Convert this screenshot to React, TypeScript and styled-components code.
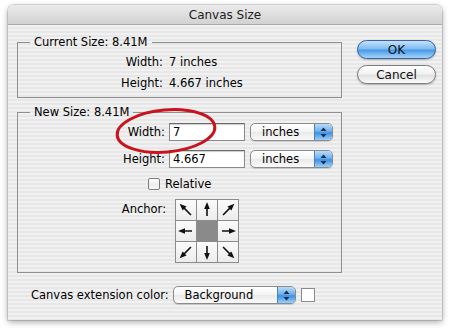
import React from "react";
import styled, { createGlobalStyle } from "styled-components";

const GlobalStyle = createGlobalStyle`
  html, body {
    margin: 0;
    padding: 0;
    background: #ffffff;
  }
  body {
    width: 450px;
    height: 328px;
    overflow: hidden;
    font-family: "DejaVu Sans", "Lucida Grande", sans-serif;
    font-size: 11.5px;
    color: #000;
  }
`;

const Page = styled.div`
  padding: 5px 8px 0 8px;
`;

const Window = styled.div`
  position: relative;
  width: 434px;
  height: 315px;
  border-radius: 6px 6px 0 0;
  background: repeating-linear-gradient(
    to bottom,
    #f1f1f1 0,
    #f1f1f1 2px,
    #e7e7e7 2px,
    #e7e7e7 4px
  );
  box-shadow: 0 2px 6px rgba(0, 0, 0, 0.35), 0 0 0 1px rgba(0, 0, 0, 0.12);
  overflow: hidden;
`;

const TitleBar = styled.div`
  height: 19px;
  border-bottom: 1px solid #a9a9a9;
  background: linear-gradient(to bottom, #ececec 0%, #dedede 50%, #d2d2d2 100%);
  display: flex;
  align-items: center;
  justify-content: center;
  font-size: 12px;
  color: #222;
`;

const Body = styled.div`
  display: flex;
  padding: 0 6px 0 9px;
`;

const LeftColumn = styled.div`
  width: 325px;
  display: flex;
  flex-direction: column;
`;

const RightColumn = styled.div`
  margin-left: 15px;
  width: 79px;
  padding-top: 15px;
  display: flex;
  flex-direction: column;
  gap: 6px;
`;

const Group = styled.fieldset<{ $top: number }>`
  margin: ${(p) => p.$top}px 0 0 0;
  padding: 0;
  min-width: 0;
  border: 1px solid #8f8f8f;
  border-radius: 0;
`;

const Legend = styled.legend`
  margin-left: 12px;
  padding: 0 4px;
  line-height: 16px;
`;

const InfoRows = styled.div`
  padding: 2px 0 4px 0;
  display: flex;
  flex-direction: column;
  gap: 1px;
`;

const InfoRow = styled.div`
  display: flex;
  height: 20px;
  align-items: center;
`;

const Label = styled.span<{ $width: number }>`
  width: ${(p) => p.$width}px;
  text-align: right;
  flex-shrink: 0;
`;

const Value = styled.span`
  margin-left: 6px;
`;

const NewRows = styled.div`
  padding: 3px 0 9px 0;
  display: flex;
  flex-direction: column;
`;

const FieldRow = styled.div<{ $gap: number }>`
  display: flex;
  align-items: center;
  height: 18px;
  margin-top: ${(p) => p.$gap}px;
`;

const TextInput = styled.div`
  margin-left: 4px;
  width: 76px;
  height: 18px;
  box-sizing: border-box;
  border: 1px solid #8a8a8a;
  border-top-color: #6a6a6a;
  box-shadow: inset 0 1px 1px rgba(0, 0, 0, 0.2);
  background: #fff;
  padding-left: 3px;
  display: flex;
  align-items: center;
`;

const SelectBox = styled.div<{ $width: number; $left: number }>`
  margin-left: ${(p) => p.$left}px;
  width: ${(p) => p.$width}px;
  height: 18px;
  box-sizing: border-box;
  border: 1px solid #8b8b8b;
  border-radius: 5px;
  background: linear-gradient(to bottom, #ffffff 0%, #f4f4f4 50%, #e9e9e9 51%, #fafafa 100%);
  box-shadow: 0 1px 1px rgba(0, 0, 0, 0.15);
  display: flex;
  align-items: center;
  overflow: hidden;
`;

const SelectText = styled.span`
  flex: 1;
  padding-left: 11px;
`;

const Stepper = styled.div`
  width: 17px;
  height: 100%;
  border-left: 1px solid #4f7fbf;
  background: linear-gradient(to bottom, #b9dcf8 0%, #6fb1ee 45%, #3f8fe2 55%, #9bd0fb 100%);
  display: flex;
  align-items: center;
  justify-content: center;
`;

const CheckRow = styled.div`
  display: flex;
  align-items: center;
  height: 18px;
  margin-top: 7px;
  padding-left: 130px;
  gap: 5px;
`;

const CheckBox = styled.div`
  width: 12px;
  height: 12px;
  box-sizing: border-box;
  border: 1px solid #7d7d7d;
  border-radius: 2px;
  background: linear-gradient(to bottom, #ffffff 0%, #ececec 60%, #f8f8f8 100%);
`;

const AnchorRow = styled.div`
  display: flex;
  align-items: flex-start;
  margin-top: 6px;
`;

const AnchorLabel = styled.span`
  width: 148px;
  text-align: right;
  line-height: 20px;
`;

const AnchorGrid = styled.div`
  margin-left: 9px;
  display: grid;
  grid-template-columns: repeat(3, 20px);
  grid-template-rows: repeat(3, 20px);
  gap: 1px;
  padding: 1px;
  background: #8c8c8c;
`;

const AnchorCell = styled.div<{ $active?: boolean }>`
  background: ${(p) =>
    p.$active ? "#8a8a8a" : "linear-gradient(to bottom, #fbfbfb, #ececec)"};
  display: flex;
  align-items: center;
  justify-content: center;
`;

const ExtensionRow = styled.div`
  display: flex;
  align-items: center;
  margin-top: 13px;
  padding-left: 14px;
`;

const Swatch = styled.div`
  margin-left: 5px;
  width: 14px;
  height: 14px;
  box-sizing: border-box;
  border: 1px solid #8a8a8a;
  background: #fff;
`;

const AquaButton = styled.div<{ $primary?: boolean }>`
  height: 19px;
  box-sizing: border-box;
  border-radius: 10px;
  border: 1px solid ${(p) => (p.$primary ? "#375f9b" : "#7b7b7b")};
  background: ${(p) =>
    p.$primary
      ? "linear-gradient(to bottom, #c5e2fb 0%, #7fbdf3 45%, #4b9ae6 55%, #a5d5fd 100%)"
      : "linear-gradient(to bottom, #ffffff 0%, #f2f2f2 45%, #e2e2e2 55%, #fbfbfb 100%)"};
  box-shadow: 0 1px 2px rgba(0, 0, 0, 0.25);
  display: flex;
  align-items: center;
  justify-content: center;
  font-size: 12px;
  color: #111;
`;

const Ellipse = styled.svg`
  position: absolute;
  left: 102px;
  top: 98px;
  pointer-events: none;
`;

const StepperIcon = () => (
  <svg width="7" height="11" viewBox="0 0 7 11">
    <polygon points="3.5,0.5 6.5,4 0.5,4" fill="#1c2f52" />
    <polygon points="0.5,7 6.5,7 3.5,10.5" fill="#1c2f52" />
  </svg>
);

const Arrow = ({ angle }: { angle: number }) => {
  const diag = angle % 90 !== 0;
  const tail = diag ? 17 : 16;
  const tip = diag ? 1 : 2;
  return (
    <svg width="20" height="20" viewBox="0 0 20 20">
      <g transform={`rotate(${angle} 10 10)`}>
        <line x1="10" y1={tail} x2="10" y2={tip + 5} stroke="#111" strokeWidth="1.6" />
        <polygon points={`10,${tip} 7.2,${tip + 7} 12.8,${tip + 7}`} fill="#111" />
      </g>
    </svg>
  );
};

const anchorAngles: (number | null)[] = [-45, 0, 45, -90, null, 90, -135, 180, 135];

const Select = ({ text, width, left }: { text: string; width: number; left: number }) => (
  <SelectBox $width={width} $left={left}>
    <SelectText>{text}</SelectText>
    <Stepper>
      <StepperIcon />
    </Stepper>
  </SelectBox>
);

export default function App() {
  return (
    <Page>
      <GlobalStyle />
      <Window>
        <TitleBar>Canvas Size</TitleBar>
        <Body>
          <LeftColumn>
            <Group $top={9}>
              <Legend>Current Size: 8.41M</Legend>
              <InfoRows>
                <InfoRow>
                  <Label $width={145}>Width:</Label>
                  <Value>7 inches</Value>
                </InfoRow>
                <InfoRow>
                  <Label $width={145}>Height:</Label>
                  <Value>4.667 inches</Value>
                </InfoRow>
              </InfoRows>
            </Group>
            <Group $top={6}>
              <Legend>New Size: 8.41M</Legend>
              <NewRows>
                <FieldRow $gap={0}>
                  <Label $width={147}>Width:</Label>
                  <TextInput>7</TextInput>
                  <Select text="inches" width={83} left={5} />
                </FieldRow>
                <FieldRow $gap={9}>
                  <Label $width={147}>Height:</Label>
                  <TextInput>4.667</TextInput>
                  <Select text="inches" width={83} left={5} />
                </FieldRow>
                <CheckRow>
                  <CheckBox />
                  <span>Relative</span>
                </CheckRow>
                <AnchorRow>
                  <AnchorLabel>Anchor:</AnchorLabel>
                  <AnchorGrid>
                    {anchorAngles.map((a, i) => (
                      <AnchorCell key={i} $active={a === null}>
                        {a !== null && <Arrow angle={a} />}
                      </AnchorCell>
                    ))}
                  </AnchorGrid>
                </AnchorRow>
              </NewRows>
            </Group>
            <ExtensionRow>
              <span>Canvas extension color:</span>
              <Select text="Background" width={123} left={4} />
              <Swatch />
            </ExtensionRow>
          </LeftColumn>
          <RightColumn>
            <AquaButton $primary>OK</AquaButton>
            <AquaButton>Cancel</AquaButton>
          </RightColumn>
        </Body>
        <Ellipse width="112" height="56" viewBox="0 0 112 56">
          <ellipse
            cx="56"
            cy="28"
            rx="49"
            ry="21"
            transform="rotate(-5 56 28)"
            fill="none"
            stroke="#c8141e"
            strokeWidth="3"
          />
        </Ellipse>
      </Window>
    </Page>
  );
}
